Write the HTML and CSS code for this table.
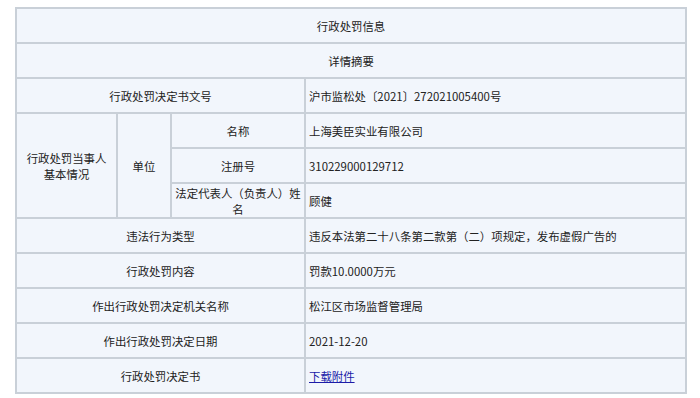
FILE: index.html
```html
<!DOCTYPE html>
<html lang="zh-CN">
  <head>
    <meta charset="UTF-8" />
    <meta name="viewport" content="width=device-width, initial-scale=1.0" />
    <link rel="stylesheet" href="styles.css">
    <title>行政处罚信息</title>
  </head>
  <body>
    <table class="penalty-table">
      <colgroup>
        <col class="col-a" />
        <col class="col-b" />
        <col class="col-c" />
        <col class="col-d" />
      </colgroup>
      <tr>
        <td colspan="4" class="center">行政处罚信息</td>
      </tr>
      <tr>
        <td colspan="4" class="center">详情摘要</td>
      </tr>
      <tr>
        <td colspan="3" class="center">行政处罚决定书文号</td>
        <td>沪市监松处〔2021〕272021005400号</td>
      </tr>
      <!-- 当事人信息 -->
      <tr>
        <td rowspan="3" class="center">行政处罚当事人<br />基本情况</td>
        <td rowspan="3" class="center">单位</td>
        <td class="center">名称</td>
        <td>上海美臣实业有限公司</td>
      </tr>
      <tr>
        <td class="center">注册号</td>
        <td>310229000129712</td>
      </tr>
      <tr>
        <td class="center tight">法定代表人（负责人）姓名</td>
        <td>顾健</td>
      </tr>
      <tr>
        <td colspan="3" class="center">违法行为类型</td>
        <td>违反本法第二十八条第二款第（二）项规定，发布虚假广告的</td>
      </tr>
      <tr>
        <td colspan="3" class="center">行政处罚内容</td>
        <td>罚款10.0000万元</td>
      </tr>
      <tr>
        <td colspan="3" class="center">作出行政处罚决定机关名称</td>
        <td>松江区市场监督管理局</td>
      </tr>
      <tr>
        <td colspan="3" class="center">作出行政处罚决定日期</td>
        <td>2021-12-20</td>
      </tr>
      <tr>
        <td colspan="3" class="center">行政处罚决定书</td>
        <td><a href="#" class="download">下载附件</a></td>
      </tr>
    </table>
  </body>
</html>
```

FILE: styles.css
```css
body {
  margin: 0;
  background-color: #fff;
  font-family: "Noto Sans CJK SC", "Noto Sans", sans-serif;
  font-size: 11.4px;
  color: #222;
}

.penalty-table {
  margin: 7px 0 0 15px;
  width: 670px;
  table-layout: fixed;
  border-collapse: collapse;
  background-color: #f2f6fc;
}

.col-a {
  width: 101px;
}

.col-b {
  width: 54px;
}

.col-c {
  width: 134px;
}

.col-d {
  width: 381px;
}

.penalty-table td {
  border: 2px solid #c9d0d8;
  height: 33px;
  padding: 0 3px;
  line-height: 16px;
  vertical-align: middle;
}

.center {
  text-align: center;
}

.tight {
  padding: 0 1px;
}

.download {
  color: #1c1ca8;
  text-decoration: underline;
}
```
